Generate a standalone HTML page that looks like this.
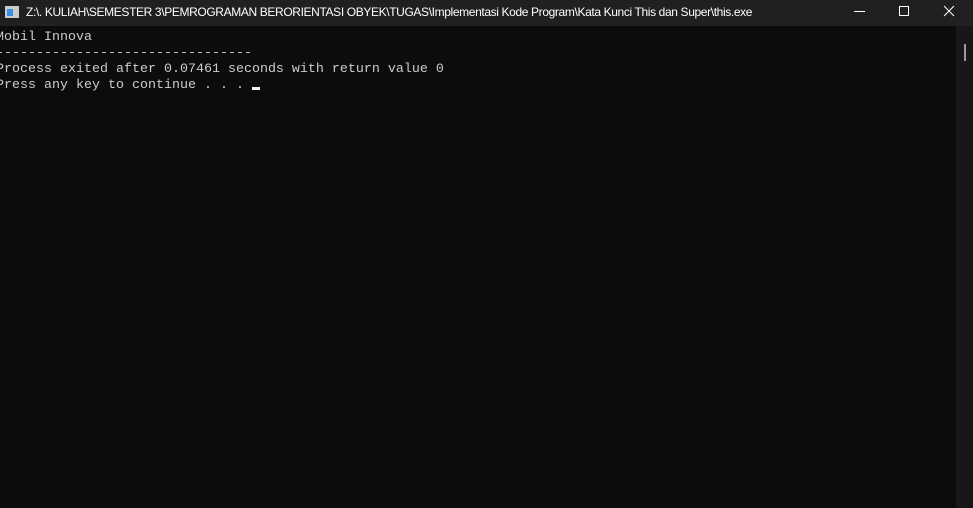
<!DOCTYPE html>
<html><head><style>
body{margin:0;width:973px;height:508px;background:#0c0c0c;overflow:hidden;position:relative;font-family:"Liberation Sans",sans-serif}
.tb{position:absolute;left:0;top:0;width:973px;height:26px;background:#202020;color:#fff;font-size:12px}
.tb .t{position:absolute;left:26px;top:5px;white-space:nowrap;letter-spacing:-0.37px}
.ic{position:absolute;left:5px;top:6px;width:14px;height:12px;background:#ccc}
.ic:after{content:"";position:absolute;left:2px;top:3px;width:6px;height:7px;background:#3a8ee6}
.sb{position:absolute;left:956px;top:26px;width:17px;height:482px;background:#171717}
.th{position:absolute;left:964px;top:44px;width:2px;height:17px;background:#9a9a9a}
pre{position:absolute;left:-4px;top:30px;margin:0;font-family:"Liberation Mono",monospace;font-size:13.33px;line-height:16px;color:#cccccc}
.cur{position:absolute;left:252px;top:87px;width:8px;height:3px;background:#f2f2f2}
</style></head><body>
<div class="tb"><div class="ic"></div><div class="t">Z:\. KULIAH\SEMESTER 3\PEMROGRAMAN BERORIENTASI OBYEK\TUGAS\Implementasi Kode Program\Kata Kunci This dan Super\this.exe</div>
<svg style="position:absolute;left:853px;top:4px" width="16" height="16"><line x1="1" y1="7.5" x2="12" y2="7.5" stroke="#fff"/></svg>
<svg style="position:absolute;left:898px;top:5px" width="14" height="14"><rect x="1.5" y="1.5" width="9" height="9" fill="none" stroke="#fff"/></svg>
<svg style="position:absolute;left:943px;top:5px" width="14" height="14"><path d="M1 1L11 11M11 1L1 11" stroke="#fff"/></svg>
</div>
<div class="sb"></div><div class="th"></div>
<pre>Mobil Innova
--------------------------------
Process exited after 0.07461 seconds with return value 0
Press any key to continue . . . </pre>
<div class="cur"></div>
</body></html>
